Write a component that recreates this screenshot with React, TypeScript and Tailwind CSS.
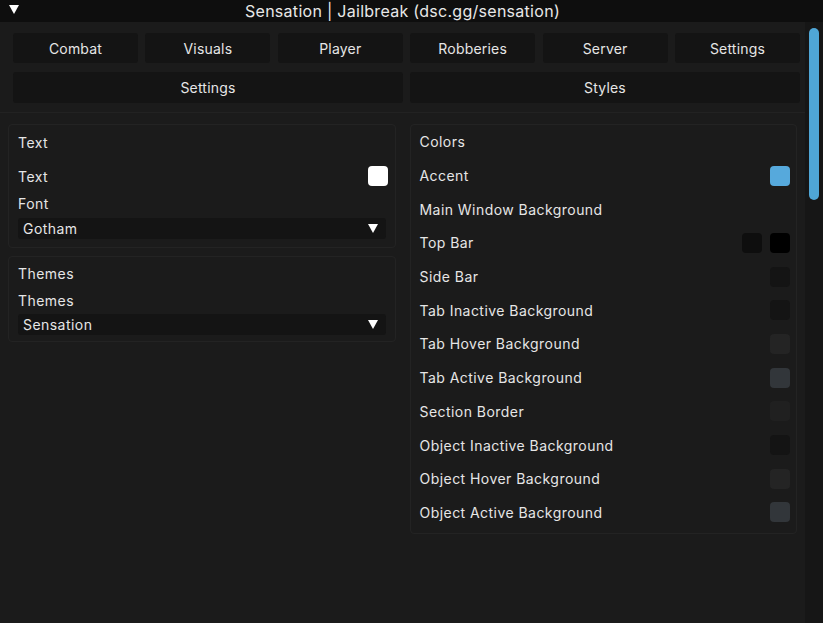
import React from "react";

const tabs1 = ["Combat", "Visuals", "Player", "Robberies", "Server", "Settings"];
const tabs2 = ["Settings", "Styles"];

type ColorRow = { label: string; swatches: string[] };
const colorRows: ColorRow[] = [
  { label: "Accent", swatches: ["#56a9dc"] },
  { label: "Main Window Background", swatches: [] },
  { label: "Top Bar", swatches: ["#0e0e0e", "#000000"] },
  { label: "Side Bar", swatches: ["#141414"] },
  { label: "Tab Inactive Background", swatches: ["#141414"] },
  { label: "Tab Hover Background", swatches: ["#242424"] },
  { label: "Tab Active Background", swatches: ["#32363a"] },
  { label: "Section Border", swatches: ["#202020"] },
  { label: "Object Inactive Background", swatches: ["#141414"] },
  { label: "Object Hover Background", swatches: ["#242424"] },
  { label: "Object Active Background", swatches: ["#32363a"] },
];

function Tri({ className = "" }: { className?: string }) {
  return (
    <svg width="10" height="9" viewBox="0 0 10 9" className={className}>
      <path d="M0 0 H10 L5 9 Z" fill="#ffffff" />
    </svg>
  );
}

function Swatch({ color }: { color: string }) {
  return <div className="w-[20px] h-[20px] rounded-[4px]" style={{ backgroundColor: color }} />;
}

function Dropdown({ value }: { value: string }) {
  return (
    <div className="h-[21px] bg-[#141414] rounded-[3px] flex items-center justify-between pl-[5px] pr-[8px] text-[14px] tracking-[0.45px] text-[#e6e6e6]">
      <span>{value}</span>
      <Tri />
    </div>
  );
}

export default function App() {
  return (
    <div
      className="w-[823px] h-[623px] bg-[#1b1b1b] flex flex-col overflow-hidden text-[#e6e6e6]"
      style={{ fontFamily: "Inter, 'Open Sans', sans-serif" }}
    >
      <div className="h-[22px] bg-[#0e0e0e] relative flex items-center justify-center shrink-0 pr-[18px]">
        <Tri className="absolute left-[9px] top-[5px]" />
        <span className="text-[16px] tracking-[0.28px] text-[#e8e8e8] leading-none">Sensation | Jailbreak (dsc.gg/sensation)</span>
      </div>
      <div className="flex flex-1 min-h-0">
        <div className="w-[805px] flex flex-col">
          <div className="pl-[13px] pr-[5px] pt-[11px] pb-[9px] border-b border-[#222222]">
            <div className="grid grid-cols-6 gap-x-[7.4px]">
              {tabs1.map((t, i) => (
                <div key={i} className="h-[30px] bg-[#141414] rounded-[3px] flex items-center justify-center text-[14px] tracking-[0.2px]">
                  {t}
                </div>
              ))}
            </div>
            <div className="grid grid-cols-2 gap-x-[7px] mt-[9px]">
              {tabs2.map((t, i) => (
                <div key={i} className="h-[31px] bg-[#141414] rounded-[3px] flex items-center justify-center text-[14px] tracking-[0.2px]">
                  {t}
                </div>
              ))}
            </div>
          </div>
          <div className="grid grid-cols-2 gap-x-[14px] px-[8px] pt-[11px] items-start tracking-[0.45px]">
            <div className="flex flex-col gap-[8px]">
              <div className="border border-[#232323] rounded-[4px] pl-[9px] pr-[7px] pb-[8px]">
                <div className="h-[34px] flex items-center text-[14px]">Text</div>
                <div className="h-[34px] flex items-center justify-between text-[14px]">
                  <span>Text</span>
                  <Swatch color="#ffffff" />
                </div>
                <div className="h-[20px] flex items-center text-[14px]">Font</div>
                <div className="mt-[5px] pr-[2px]">
                  <Dropdown value="Gotham" />
                </div>
              </div>
              <div className="border border-[#232323] rounded-[4px] pl-[9px] pr-[9px] pb-[6px]">
                <div className="h-[33px] flex items-center text-[14px]">Themes</div>
                <div className="h-[20px] flex items-center text-[14px]">Themes</div>
                <div className="mt-[4px]">
                  <Dropdown value="Sensation" />
                </div>
              </div>
            </div>
            <div className="border border-[#232323] rounded-[4px] pl-[9px] pr-[6px] pb-[4px]">
              <div className="h-[33.7px] flex items-center text-[14px]">Colors</div>
              {colorRows.map((r, i) => (
                <div key={i} className="h-[33.7px] flex items-center justify-between text-[14px]">
                  <span>{r.label}</span>
                  <div className="flex gap-[8px]">
                    {r.swatches.map((c, j) => (
                      <Swatch key={j} color={c} />
                    ))}
                  </div>
                </div>
              ))}
            </div>
          </div>
        </div>
        <div className="w-[18px] bg-[#161616] flex justify-center pt-[6px]">
          <div className="w-[10px] h-[172px] rounded-full bg-[#4fa6d6]" />
        </div>
      </div>
    </div>
  );
}
